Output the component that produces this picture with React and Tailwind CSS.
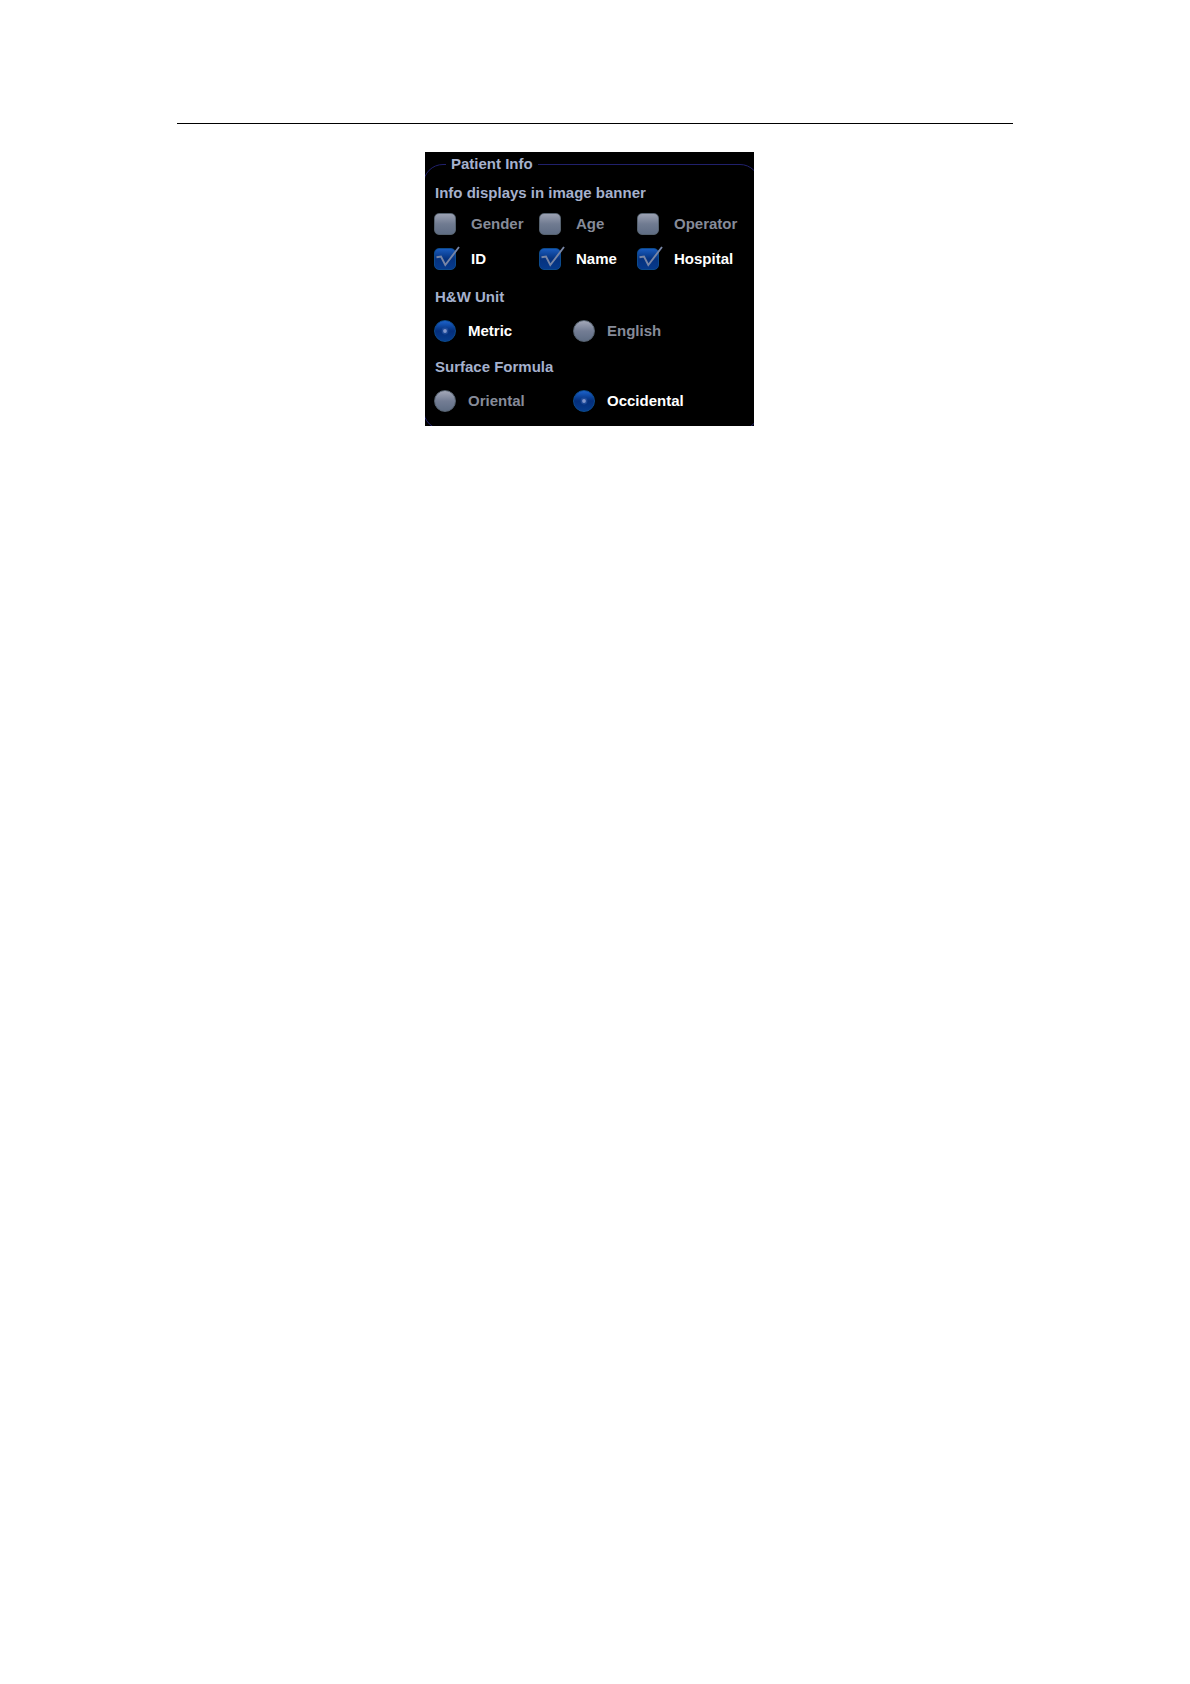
import { useState } from 'react'

const BANNER_FIELDS = ['Gender', 'Age', 'Operator', 'ID', 'Name', 'Hospital']

function CheckOption({ label, checked, onChange }) {
  return (
    <label className="flex items-center gap-[15px] cursor-pointer">
      <span className="relative w-[22px] h-[22px] shrink-0">
        <input
          type="checkbox"
          checked={checked}
          onChange={onChange}
          className="block appearance-none w-full h-full rounded-[5px] border border-[#56626f] bg-linear-to-b from-[#9ba1b2] via-[#707b91] to-[#5f6d84] checked:border-[#0c4a8c] checked:from-[#1a5bbd] checked:via-[#05327f] checked:to-[#063a8c]"
        />
        {checked && (
          <svg className="absolute left-0 -top-1 w-[26px] h-[26px] pointer-events-none" viewBox="0 0 26 26" fill="none">
            <path d="M2.5 13.2L7 12.6L11.3 21L25 3" stroke="#7886a6" strokeWidth="1.9" />
          </svg>
        )}
      </span>
      <span className={checked ? 'text-white' : 'text-[#868b99]'}>{label}</span>
    </label>
  )
}

function RadioOption({ name, label, checked, onChange }) {
  return (
    <label className="flex items-center gap-3 cursor-pointer">
      <span className="relative w-[22px] h-[22px] shrink-0">
        <input
          type="radio"
          name={name}
          checked={checked}
          onChange={onChange}
          className="block appearance-none w-full h-full rounded-full border border-[#56626f] bg-linear-to-b from-[#a3a8b8] via-[#737d94] to-[#5f6d84] checked:border-[#0c4a8c] checked:from-[#1d63cb] checked:via-[#042e7b] checked:to-[#063c8e]"
        />
        {checked && (
          <svg className="absolute inset-0 w-full h-full pointer-events-none" viewBox="0 0 22 22">
            <circle cx="11" cy="11" r="3.4" fill="#2b57a5" opacity="0.6" />
            <circle cx="11" cy="11" r="1.9" fill="#8096cc" />
          </svg>
        )}
      </span>
      <span className={checked ? 'text-white' : 'text-[#868b99]'}>{label}</span>
    </label>
  )
}

function RadioRow({ title, name, options, value, onChange }) {
  return (
    <div role="radiogroup" aria-label={title}>
      <h2 className="mt-[15px] mb-[13px] pl-px">{title}</h2>
      <div className="grid grid-cols-[139px_auto] justify-start">
        {options.map(o => (
          <RadioOption key={o} name={name} label={o} checked={value === o} onChange={() => onChange(o)} />
        ))}
      </div>
    </div>
  )
}

export default function App() {
  const [shown, setShown] = useState(['ID', 'Name', 'Hospital'])
  const [unit, setUnit] = useState('Metric')
  const [formula, setFormula] = useState('Occidental')

  function toggle(field) {
    setShown(prev => (prev.includes(field) ? prev.filter(f => f !== field) : [...prev, field]))
  }

  return (
    <main className="min-h-screen bg-white px-[177px] pt-[123px] font-['Liberation_Sans',Arial,sans-serif]">
      <hr className="border-t border-black" />

      <div className="mt-7 pr-[11px] flex justify-center">
        <div className="w-full max-w-[329px] overflow-hidden bg-black pt-[3px] text-[15px] leading-5 font-bold text-[#a5b1cd]">
          {/* The frame runs past the panel on every side but the top */}
          <fieldset className="-ml-0.5 -mr-1.5 -mb-1 rounded-[20px] border border-[#20206c] pl-2.5 pb-[17px]">
            <legend className="ml-3 px-[5px] leading-[18px]">Patient Info</legend>

            <h2 className="mt-2.5 mb-2.5 pl-px">Info displays in image banner</h2>
            <div className="mb-[17px] grid grid-cols-[105px_98px_auto] justify-start gap-y-[13px]">
              {BANNER_FIELDS.map(f => (
                <CheckOption key={f} label={f} checked={shown.includes(f)} onChange={() => toggle(f)} />
              ))}
            </div>

            <RadioRow title="H&W Unit" name="unit" options={['Metric', 'English']} value={unit} onChange={setUnit} />
            <RadioRow
              title="Surface Formula"
              name="formula"
              options={['Oriental', 'Occidental']}
              value={formula}
              onChange={setFormula}
            />
          </fieldset>
        </div>
      </div>
    </main>
  )
}
